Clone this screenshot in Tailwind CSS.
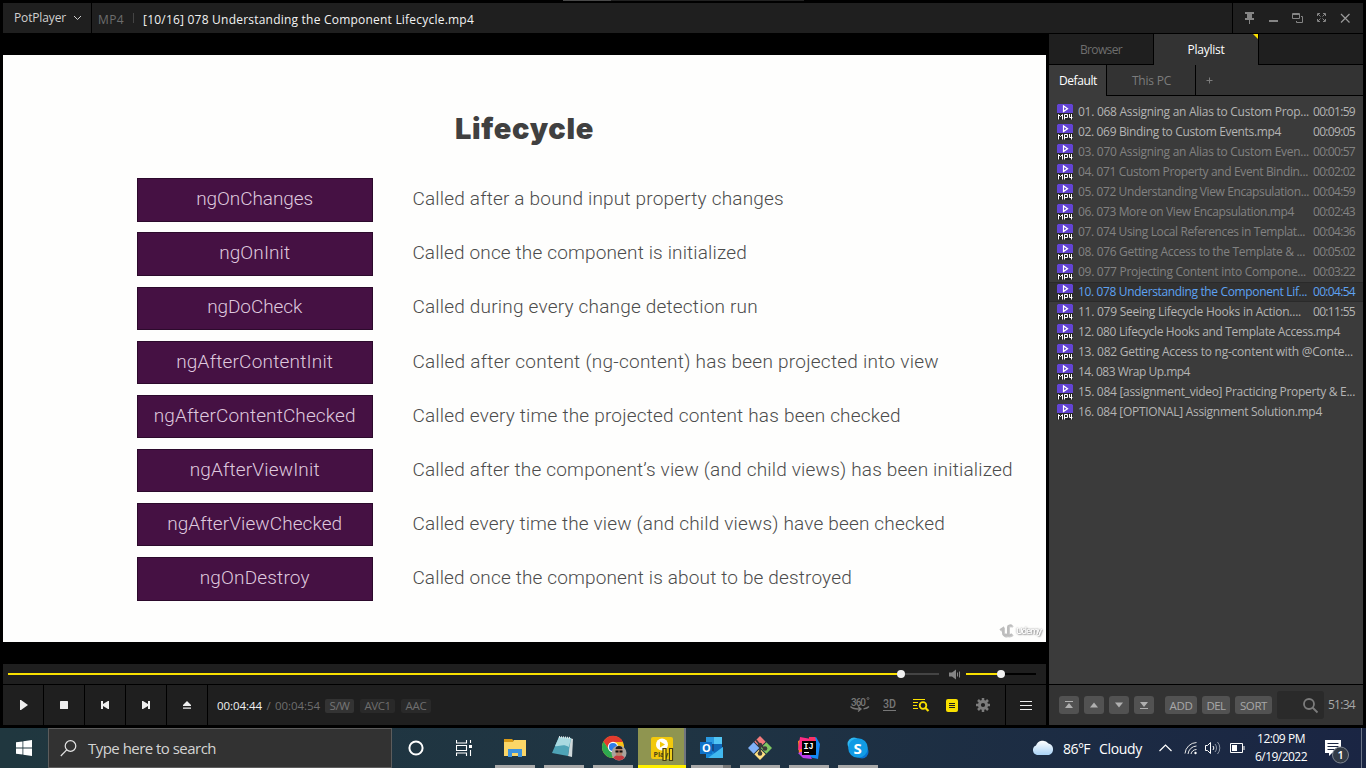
<!DOCTYPE html>
<html lang="en">
<head>
<meta charset="utf-8">
<title>PotPlayer</title>
<script src="https://cdn.jsdelivr.net/npm/@tailwindcss/browser@4"></script>
</head>
<body class="w-[1366px] h-[768px] overflow-hidden bg-black font-['Open_Sans','Noto_Sans',sans-serif] text-[12px] whitespace-nowrap select-none">
<div class="flex flex-col w-[1366px] h-[768px]">

  <!-- Player window -->
  <div class="flex flex-col h-[728px] px-[3px] pb-[3px]">
    <div class="h-[3px] flex pl-[560px]"><div class="w-12 h-px bg-[#4a4a4a]"></div><div class="w-[193px] h-px bg-[#222]"></div></div>

    <!-- Title bar -->
    <header class="flex h-[30px] gap-px shrink-0">
      <div class="w-[88px] bg-[#1f1f1f] flex items-center pl-[11px] pb-px text-[#d0d0d0]">
        <span class="leading-4" data-w="52">PotPlayer</span>
        <svg class="ml-[7px]" width="9" height="6" viewBox="0 0 9 6" fill="none" stroke="#d0d0d0"><path d="M1 1l3.500 3.500L8 1"/></svg>
      </div>
      <div class="w-[1140px] bg-[#1f1f1f] flex items-center pl-[6px] pt-[3px]">
        <span class="text-[#6d6d6d]" data-w="26">MP4</span>
        <span class="w-px h-[10px] bg-[#444] ml-[9px] mb-[3px]"></span>
        <span class="text-[#f2f2f2] ml-[9px]" data-w="331">[10/16] 078 Understanding the Component Lifecycle.mp4</span>
      </div>
      <div class="flex-1 bg-[#1f1f1f] flex items-center pl-[11px] gap-[13px]">
        <svg width="11" height="12" viewBox="0 0 11 12" fill="#858585"><path d="M1 0h9v2H8v4h2v2H6v4H5V8H1V6h2V2H1z"/></svg>
        <svg width="11" height="12" viewBox="0 0 11 12" fill="#858585"><path d="M1 8h9v2H1z"/></svg>
        <svg width="11" height="12" viewBox="0 0 11 12" fill="none" stroke="#858585"><path d="M.5 1.500h7v5h-7zM.5 2.500h7M9 4.500h1.500v6h-6V9"/></svg>
        <svg width="11" height="12" viewBox="0 0 11 12" fill="none" stroke="#858585"><path d="M1.500 4V1.500H4M7 1.500h2.500V4M9.500 7v2.500H7M4 9.500H1.500V7M2 2l2.500 2.500M9 2L6.500 4.500M2 9l2.500-2.500M9 9L6.500 6.500"/></svg>
        <svg width="11" height="12" viewBox="0 0 11 12" fill="none" stroke="#9a9a9a" stroke-width="1.200"><path d="M1 2l8.500 8.500M9.500 2L1 10.500"/></svg>
      </div>
    </header>

    <div class="flex flex-1 gap-[3px] min-h-0">
      <!-- Video and controls -->
      <main class="w-[1043px] flex flex-col">
        <section class="mt-[22px] h-[587px] bg-[#fefefd] font-[Roboto,sans-serif] relative">
          <h1 class="font-[Inter,sans-serif] font-black text-[29px] leading-[36px] text-[#404040] pt-[56px] pl-[452px]"><span data-w="139">Lifecycle</span></h1>
          <div id="hooks" class="mt-[31.300px] ml-[133.700px] flex flex-col gap-[10.850px]"></div>
          <div class="absolute right-[5px] bottom-[4px] flex items-center gap-[2px] text-[#ababab] drop-shadow-[1px_1px_0_#ccc]">
            <svg width="15" height="14" viewBox="0 0 15 14" fill="none" stroke="#bdbdbd" stroke-width="2"><path d="M1 6l3-2v5c0 4 5 3 5 0V3c0-2 3-2 4-1M6 10c2 2 5 2 7 0"/></svg>
            <span class="font-['Open_Sans',sans-serif] font-semibold text-[9px] leading-3 text-white [text-shadow:0_0_2px_#777]" data-w="25">Udemy</span>
          </div>
        </section>
        <div class="mt-[22px] h-[20px] bg-[#1f1f1f] flex items-center pl-[5px]">
          <div class="w-[893px] h-[2px] bg-[#f9e000]"></div>
          <div class="relative z-10 w-2 h-2 rounded-full bg-[#f0f0f0] -mx-1"></div>
          <div class="w-[38px] h-[2px] bg-[#444]"></div>
          <svg class="ml-[10px]" width="12" height="11" viewBox="0 0 12 11"><path fill="#858585" d="M0 3.500h3L7 .5v10l-4-3H0z"/><path stroke="#858585" d="M8.500 3.500v4M10.500 2.500v6"/></svg>
          <div class="ml-[5px] w-[35px] h-[2px] bg-[#f9e000]"></div>
          <div class="relative z-10 w-2 h-2 rounded-full bg-[#f0f0f0] -mx-1"></div>
          <div class="w-[35px] h-[2px] bg-black"></div>
        </div>
        <div class="mt-px h-[40px] flex gap-px">
          <div class="w-10 bg-[#1f1f1f] flex items-center justify-center"><svg width="12" height="12" viewBox="0 0 12 12" fill="#eee"><path d="M3 1h1l7 5-7 5H3z"/></svg></div>
          <div class="w-10 bg-[#1f1f1f] flex items-center justify-center"><svg width="12" height="12" viewBox="0 0 12 12" fill="#eee"><rect x="2" y="2" width="8" height="8" rx=".5"/></svg></div>
          <div class="w-10 bg-[#1f1f1f] flex items-center justify-center"><svg width="12" height="12" viewBox="0 0 12 12" fill="#eee"><path d="M2 2h2v3l5-3h1v8H9L4 7v3H2z"/></svg></div>
          <div class="w-10 bg-[#1f1f1f] flex items-center justify-center"><svg width="12" height="12" viewBox="0 0 12 12" fill="#eee"><path d="M10 2H8v3L3 2H2v8h1l5-3v3h2z"/></svg></div>
          <div class="w-10 bg-[#1f1f1f] flex items-center justify-center"><svg width="12" height="12" viewBox="0 0 12 12" fill="#eee"><path d="M6 2l4 4v1H2V6zM2 8.500h8v1.200H2z"/></svg></div>
          <div class="flex-1 bg-[#1f1f1f] flex items-center pl-[9px] text-[#6e6e6e] text-[11.500px]">
            <div class="flex items-center pt-[2px]">
              <span class="text-[#f0f0f0]" data-w="45">00:04:44</span><span class="w-[13px] text-center">/</span><span data-w="45">00:04:54</span>
              <span class="ml-[5px] h-[14px] w-[29px] rounded-[2px] bg-[#333] flex items-center justify-center text-[#777]"><span data-w="20">S/W</span></span>
              <span class="ml-[6px] h-[14px] w-[35px] rounded-[2px] bg-[#292929] flex items-center justify-center"><span data-w="26">AVC1</span></span>
              <span class="ml-[6px] h-[14px] w-[30px] rounded-[2px] bg-[#292929] flex items-center justify-center"><span data-w="21">AAC</span></span>
            </div>
            <div class="ml-auto flex items-center pr-[14px]">
              <svg width="20" height="18" viewBox="0 0 20 18"><text x="1" y="9.500" font-family="Roboto" font-weight="500" font-size="10" fill="#777" textLength="15">360</text><circle cx="18" cy="2.500" r="1" fill="none" stroke="#777" stroke-width=".8"/><path d="M.5 10.500c1.500 2 3.500 2.300 7.500 2.500M19 10.500c-1.500 1.700-3 2-5.500 2.300M8 10.500l3 2.500-3 2.500M8 13h3" fill="none" stroke="#777" stroke-width="1.300"/></svg>
              <svg class="ml-[12px]" width="15" height="18" viewBox="0 0 15 18"><text x="1" y="11.500" font-family="Roboto" font-weight="500" font-size="12" fill="#777" textLength="13" lengthAdjust="spacingAndGlyphs">3D</text><path d="M1 14.500h13" stroke="#777"/></svg>
              <svg class="ml-[15px]" width="18" height="14" viewBox="0 0 18 14" fill="none" stroke="#f9e000"><path d="M1 1.500h12M1 4.500h5M1 7.500h4M1 10.500h5"/><circle cx="11" cy="7.500" r="3.300" stroke-width="1.800"/><path d="M13.500 10l3 3" stroke-width="2.200"/></svg>
              <svg class="ml-[16px]" width="12" height="13" viewBox="0 0 12 13"><rect width="12" height="13" rx="2" fill="#f9e000"/><path d="M3 4.500h6M3 6.500h6M3 8.500h6" stroke="#1f1f1f"/></svg>
              <svg class="ml-[17px]" width="16" height="16" viewBox="0 0 16 16" fill="none" stroke="#7c7c7c"><circle cx="8" cy="8" r="3.600" stroke-width="3"/><path stroke-width="2.500" d="M8 1v3M8 12v3M1 8h3M12 8h3M3 3l2 2M11 11l2 2M13 3l-2 2M5 11l-2 2"/></svg>
            </div>
          </div>
          <div class="w-10 bg-[#1f1f1f] flex items-center justify-center"><svg width="12" height="10" viewBox="0 0 12 10" stroke="#eee"><path d="M0 1.500h12M0 5.500h12M0 9.500h12"/></svg></div>
        </div>
      </main>

      <!-- Playlist panel -->
      <aside class="flex-1 flex flex-col pt-px">
        <nav class="flex h-[31px]">
          <div class="w-[105px] border-r border-b border-black bg-[#1f1f1f] flex items-center justify-center text-[#6e6e6e] pt-px"><span data-w="42">Browser</span></div>
          <div class="w-[104px] bg-[#333] flex items-center justify-center text-white relative"><span data-w="37">Playlist</span><div class="absolute top-0 right-0 w-[5px] h-[5px] bg-[#f9e000] [clip-path:polygon(0_0,100%_0,100%_100%)]"></div></div>
          <div class="flex-1 border-l border-b border-black bg-[#1f1f1f]"></div>
        </nav>
        <nav class="flex h-[31px]">
          <div class="w-[57px] bg-[#3b3b3b] flex items-center justify-center text-white pt-px pl-px"><span data-w="38">Default</span></div>
          <div class="w-[90px] border-x border-b border-black bg-[#333] flex items-center justify-center text-[#7c7c7c] pt-px pl-px"><span data-w="39">This PC</span></div>
          <div class="flex-1 border-b border-black bg-[#333] flex items-center pl-[10px] pt-px"><svg width="7" height="7" viewBox="0 0 7 7" stroke="#7c7c7c"><path d="M3.500 .5v6M.5 3.500h6"/></svg></div>
        </nav>
        <div id="playlist" class="h-[588px] bg-[#3b3b3b] pt-[6px]"></div>
        <div class="mt-px flex-1 bg-[#333] flex items-center pl-[10px] text-[#a8a8a8]">
          <div class="flex gap-[5px]">
            <div class="w-5 h-[18px] rounded-[3px] bg-[#525252] flex items-center justify-center"><svg width="10" height="10" viewBox="0 0 10 10" fill="#b0b0b0"><path d="M1 1h8v1H1zM5 3l4 5H1z"/></svg></div>
            <div class="w-5 h-[18px] rounded-[3px] bg-[#525252] flex items-center justify-center"><svg width="10" height="10" viewBox="0 0 10 10" fill="#b0b0b0"><path d="M5 2.500l4 5H1z"/></svg></div>
            <div class="w-5 h-[18px] rounded-[3px] bg-[#525252] flex items-center justify-center"><svg width="10" height="10" viewBox="0 0 10 10" fill="#b0b0b0"><path d="M5 7.500l4-5H1z"/></svg></div>
            <div class="w-5 h-[18px] rounded-[3px] bg-[#525252] flex items-center justify-center"><svg width="10" height="10" viewBox="0 0 10 10" fill="#b0b0b0"><path d="M1 8h8v1H1zM5 7l4-5H1z"/></svg></div>
          </div>
          <div class="ml-[11px] w-8 h-[18px] rounded-[3px] bg-[#525252] flex items-center justify-center text-[11.500px] pt-[2px]"><span data-w="23">ADD</span></div>
          <div class="ml-[5px] w-7 h-[18px] rounded-[3px] bg-[#525252] flex items-center justify-center text-[11.500px] pt-[2px]"><span data-w="19">DEL</span></div>
          <div class="ml-[5px] w-[37px] h-[18px] rounded-[3px] bg-[#525252] flex items-center justify-center text-[11.500px] pt-[2px]"><span data-w="27">SORT</span></div>
          <div class="ml-[5px] w-[47px] h-7 rounded-[3px] bg-[#2a2a2a] flex items-center justify-end pr-[5px]"><svg width="17" height="17" viewBox="0 0 17 17" fill="none" stroke="#7c7c7c" stroke-width="1.800"><circle cx="7" cy="7" r="5"/><path d="M10.500 10.500l5 5"/></svg></div>
          <span class="ml-[4px]" data-w="27">51:34</span>
        </div>
      </aside>
    </div>
  </div>

  <!-- Taskbar -->
  <footer class="h-10 flex bg-linear-to-r from-[#20373f] via-[#1f3443] to-[#1a2543] text-white">
    <div class="w-12 flex items-center justify-center"><svg width="16" height="16" viewBox="0 0 16 16" fill="#fff"><path d="M0 2.300L6.500 1.400V7.500H0zM7.300 1.200L16 0v7.500H7.300zM0 8.400h6.500v6.200L0 13.700zM7.300 8.400H16V16l-8.700-1.200z"/></svg></div>
    <div class="w-[344px] border border-[#5c5c5c] bg-[#323232] flex items-center pl-[11px] text-[#d4d4d4] text-[15px]">
      <svg width="17" height="17" viewBox="0 0 17 17" fill="none" stroke="#e4e4e4" stroke-width="1.200"><circle cx="10.500" cy="6" r="5.300"/><path d="M6.700 9.800L.8 16"/></svg>
      <span class="ml-[11px]" data-w="128">Type here to search</span>
    </div>
    <div class="w-[48px] flex items-center justify-center"><svg width="16" height="16" viewBox="0 0 16 16" fill="none" stroke="#fff" stroke-width="2"><circle cx="8" cy="8" r="6.600"/></svg></div>
    <div class="w-[50px] flex items-center pl-[16px]"><svg width="17" height="16" viewBox="0 0 17 16" fill="none" stroke="#fff" stroke-width="1.100"><path d="M.5 0v3h10V0M.5 5.500h10v5H.5zM.5 16v-3h10v3M14.500 0v3M14.500 10v6"/><path fill="#fff" stroke="none" d="M13 5h3v3h-3z"/></svg></div>

    <div class="w-[49px] flex flex-col items-center"><div class="h-[37px] flex items-center"><svg class="translate-y-px" width="22" height="19" viewBox="0 0 22 19"><path fill="#d99a16" d="M0 1h8l2 2v3H0z"/><path fill="#fbd667" d="M0 4h9l1-2h12v16H0z"/><path fill="#3f93db" d="M4 19v-8h14v8h-4v-4H8v4z"/></svg></div><div class="w-10 h-[3px] bg-[#a9a9a9]"></div></div>
    <div class="w-[49px] flex flex-col items-center"><div class="h-[37px] flex items-center"><svg class="-translate-x-px" width="23" height="23" viewBox="0 0 23 23"><path fill="#cfd8da" d="M19 3l3 1-1 18-4-1z"/><path fill="#4fa3b6" d="M8 2l12 1-3 18L1 18z"/><path fill="#a9d9e0" d="M8 2l12 1-2 9C12 8 8 12 4 11z"/><path d="M8 2l12 1" stroke="#dfe7e8" stroke-width="2" stroke-dasharray="1 1"/></svg></div><div class="w-10 h-[3px] bg-[#a9a9a9]"></div></div>
    <div class="w-[50px] flex flex-col items-center"><div class="h-[37px] flex items-center"><svg class="translate-x-px translate-y-px" width="26" height="26" viewBox="0 0 26 26"><circle cx="12" cy="12" r="11" fill="#fbc116"/><path d="M2.500 6.500A11 11 0 0 1 22 7H12L7.500 14z" fill="#e33b2e"/><path d="M2.500 6.500A11 11 0 0 0 11 23l5-8-8.500-1z" fill="#2da94f"/><circle cx="12" cy="12" r="5.200" fill="#fff"/><circle cx="12" cy="12" r="4.100" fill="#2d7de9"/><circle cx="18" cy="18" r="7.500" fill="#a9a49e"/><path d="M12.500 23c1-4 10-4 11 0a7.500 7.500 0 0 1-11 0z" fill="#c5383f"/><ellipse cx="18" cy="16.500" rx="3.500" ry="4.500" fill="#b88368"/><path d="M14.500 14c0-4 7-4 7 0z" fill="#221c1b"/><path d="M14.500 15.500h3v2h-3zM18.500 15.500h3v2h-3z" fill="#111"/></svg></div><div class="w-10 h-[3px] bg-[#a9a9a9]"></div></div>
    <div class="w-[48px] flex flex-col items-center bg-[#8f9550] border-r-2 border-[#6f7480]"><div class="h-[37px] flex items-center"><svg class="translate-x-px translate-y-px" width="24" height="26" viewBox="0 0 24 26"><rect x="1" y="2" width="22" height="22" rx="2" fill="#f2c90d"/><circle cx="12" cy="9.500" r="6" fill="#fff"/><path d="M10 6.500l5 3-5 3z" fill="#f2c90d"/><text x="3.500" y="22" font-family="Open Sans" font-weight="700" font-size="7" fill="#4d4515">Play</text><path fill="#ffde20" stroke="#453d10" stroke-width="1.200" d="M13 13.500h3v12h-3zM19.500 13.500h3v12h-3z"/></svg></div><div class="w-[48px] shrink-0 h-[3px] translate-x-px bg-[#fff000]"></div></div>
    <div class="w-[50px] flex flex-col items-center"><div class="h-[37px] flex items-center"><svg class="translate-y-px" width="25" height="24" viewBox="0 0 25 24"><path fill="#1067b7" d="M7 1h16v18H7z"/><path fill="#2a9ae2" d="M7 1h8v7H7z"/><path fill="#52c6f5" d="M15 1h8v7h-8z"/><path fill="#174a87" d="M7 8h8v7H7z"/><path fill="#1788d8" d="M7 22V12l9 5 8-6v11z"/><path fill="#41b8ee" d="M24 11v11H9z"/><path fill="#0f71c8" d="M1 6h12v12H1z"/><text x="3" y="16" font-family="Open Sans" font-weight="700" font-size="11" fill="#fff">O</text></svg></div><div class="w-10 h-[3px] flex bg-[#a9a9a9] justify-end"><div class="w-[8px] bg-[#777]"></div></div></div>
    <div class="w-[48px] flex flex-col items-center"><div class="h-[37px] flex items-center"><svg class="translate-y-px" width="24" height="24" viewBox="0 0 24 24"><g transform="rotate(45 12 12)"><path fill="#f47b7c" d="M3.500 3.500h8v8h-8z"/><path fill="#80c862" d="M12.500 3.500h8v8h-8z"/><path fill="#80b1f8" d="M3.500 12.500h8v8h-8z"/><path fill="#ffe082" d="M12.500 12.500h8v8h-8z"/></g><path d="M8 4l4 5v9M12 9l5 4" fill="none" stroke="#3b3b3b" stroke-width="1.800"/><g fill="#3b3b3b"><circle cx="12" cy="9" r="2.300"/><circle cx="12" cy="17.500" r="2.300"/><circle cx="17" cy="12.500" r="2.300"/></g></svg></div><div class="w-10 h-[3px] bg-[#a9a9a9]"></div></div>
    <div class="w-[50px] flex flex-col items-center"><div class="h-[37px] flex items-center"><svg class="translate-y-px" width="24" height="24" viewBox="0 0 24 24"><path fill="#ff8123" d="M1 5l7-3v14l-6 2z"/><path fill="#fe2c85" d="M3 1l11 2-2 8L1 14z"/><path fill="#1488f5" d="M13 4l6-3 4 7-2 15-9-2z"/><path fill="#bb3df0" d="M1 17l9-3 5 9-9-1z"/><path fill="#fc3164" d="M12 1h6l1 4h-7z"/><path d="M5 5h14v14H5z"/><text x="6.500" y="12.500" font-family="Liberation Mono" font-weight="700" font-size="8.500" fill="#fff">IJ</text><path fill="#fff" d="M7 16h5v1H7z"/></svg></div><div class="w-10 h-[3px] bg-[#a9a9a9]"></div></div>
    <div class="w-[48px] flex flex-col items-center"><div class="h-[37px] flex items-center"><svg class="translate-y-px" width="24" height="24" viewBox="0 0 24 24"><circle cx="8" cy="8" r="6.500" fill="#30b8f1"/><circle cx="16" cy="16" r="6.500" fill="#0972d0"/><circle cx="12" cy="12" r="9.800" fill="#119be5"/><text x="7.500" y="17.500" font-family="Open Sans" font-weight="700" font-size="15" fill="#fff">S</text></svg></div><div class="w-10 h-[3px] bg-[#a9a9a9]"></div></div>

    <!-- Tray -->
    <div class="flex items-center ml-auto w-[335px] text-[14px]">
      <svg width="24" height="18" viewBox="0 0 24 18"><defs><linearGradient id="cl" x2="0" y2="1"><stop stop-color="#fff"/><stop offset="1" stop-color="#a9d2f5"/></linearGradient></defs><path fill="url(#cl)" d="M6 16a5 5 0 0 1-1-9.500A7.200 7.200 0 0 1 17.500 4.500a6 6 0 0 1 .5 11.500z"/></svg>
      <span class="ml-[8px]" data-w="27">86°F</span><span class="ml-[9px]" data-w="43">Cloudy</span>
      <svg class="ml-[17px]" width="13" height="8" viewBox="0 0 13 8" fill="none" stroke="#fff" stroke-width="1.200"><path d="M.5 7l6-6 6 6"/></svg>
      <svg class="ml-[12px]" width="14" height="14" viewBox="0 0 14 14" fill="none" stroke="#e8e8e8"><path d="M1 12.500A12 12 0 0 1 12.500 1.500M4 13A9 9 0 0 1 12.500 5M7 13a6 6 0 0 1 5.500-4.500"/><circle cx="11.500" cy="12" r="1.200" fill="#fff" stroke="none"/></svg>
      <svg class="ml-[7px]" width="16" height="14" viewBox="0 0 16 14" fill="none" stroke="#fff"><path d="M.5 4.500h2l3-3v11l-3-3h-2zM8 5a3 3 0 0 1 0 4"/><path stroke="#8f97a6" d="M10 3a6 6 0 0 1 0 8M12.500 1a9 9 0 0 1 0 12"/></svg>
      <svg class="ml-[9px]" width="15" height="10" viewBox="0 0 15 10" fill="none" stroke="#fff"><path d="M.5.5h12v9H.5zM14 3v4"/><path fill="#fff" stroke="none" d="M2 2h5v6H2z"/></svg>
      <div class="ml-[9px] w-[54px] flex flex-col items-center text-[12px] leading-[18px] -mt-px"><span data-w="48">12:09 PM</span><span data-w="52">6/19/2022</span></div>
      <svg class="ml-[16px] mt-[8px]" width="26" height="26" viewBox="0 0 26 26"><path fill="#fff" d="M1 1h16v13H8l-3 3v-3H1z"/><path stroke="#1b2743" d="M3.500 4.500h11M3.500 7.500h11M3.500 10.500h7"/><circle cx="16.500" cy="16" r="8" fill="#333b46" stroke="#7e8590"/><text x="13.500" y="20" font-family="Open Sans" font-size="11" font-weight="600" fill="#fff">1</text></svg>
      <div class="ml-auto mr-[4px] w-px h-10 bg-[#6c7588]"></div>
    </div>
  </footer>
</div>

<script>
  // [label, label width, description, description width]
  const hooks = [
    ['ngOnChanges', 117, 'Called after a bound input property changes', 371],
    ['ngOnInit', 71, 'Called once the component is initialized', 334],
    ['ngDoCheck', 95, 'Called during every change detection run', 345],
    ['ngAfterContentInit', 157, 'Called after content (ng-content) has been projected into view', 526],
    ['ngAfterContentChecked', 202, 'Called every time the projected content has been checked', 488],
    ['ngAfterViewInit', 130, 'Called after the component’s view (and child views) has been initialized', 600],
    ['ngAfterViewChecked', 175, 'Called every time the view (and child views) have been checked', 532],
    ['ngOnDestroy', 110, 'Called once the component is about to be destroyed', 439],
  ];
  document.getElementById('hooks').innerHTML = hooks.map(([n, nw, d, dw]) => `
    <div class="flex items-center h-[43.300px] text-[19px] font-light">
      <div class="w-[236px] shrink-0 h-full bg-[#451143] border border-[#2c0a2c] flex items-center justify-center text-[#dfc8de] pb-px"><span data-w="${nw}">${n}</span></div>
      <span class="ml-[39.700px] pb-px text-[#4c4c4c]" data-w="${dw + 0.5}">${d}</span>
    </div>`).join('');

  // [title, title width, duration, state]
  const items = [
    ['01. 068 Assigning an Alias to Custom Prop...', 231, '00:01:59', ''],
    ['02. 069 Binding to Custom Events.mp4', 203, '00:09:05', ''],
    ['03. 070 Assigning an Alias to Custom Even...', 231, '00:00:57', 'seen'],
    ['04. 071 Custom Property and Event Bindin...', 230, '00:02:02', 'seen'],
    ['05. 072 Understanding View Encapsulation...', 231, '00:04:59', 'seen'],
    ['06. 073 More on View Encapsulation.mp4', 216, '00:02:43', 'seen'],
    ['07. 074 Using Local References in Templat...', 227, '00:04:36', 'seen'],
    ['08. 076 Getting Access to the Template &amp; ...', 227, '00:05:02', 'seen'],
    ['09. 077 Projecting Content into Compone...', 228, '00:03:22', 'seen'],
    ['10. 078 Understanding the Component Lif...', 229, '00:04:54', 'playing'],
    ['11. 079 Seeing Lifecycle Hooks in Action....', 223, '00:11:55', ''],
    ['12. 080 Lifecycle Hooks and Template Access.mp4', 262, '', ''],
    ['13. 082 Getting Access to ng-content with @Conte...', 275, '', ''],
    ['14. 083 Wrap Up.mp4', 112, '', ''],
    ['15. 084 [assignment_video] Practicing Property &amp; E...', 277, '', ''],
    ['16. 084 [OPTIONAL] Assignment Solution.mp4', 244, '', ''],
  ];
  const tone = {
    '': 'text-[#b4b4b4] border-transparent',
    seen: 'text-[#828282] border-transparent',
    playing: 'text-[#5ea2f2] bg-[#313131] border-[#2a2a2a]',
  };
  document.getElementById('playlist').innerHTML = items.map(([t, w, time, s]) => `
    <div class="h-5 flex items-center border-y pl-2 pr-2 ${tone[s]}">
      <svg class="shrink-0" width="16" height="16" viewBox="0 0 16 16"><rect width="16" height="16" rx="1" fill="#262626"/><path fill="#6344d4" d="M1 0h14l1 1v8H0V1z"/><path d="M6.500 2v5.500L10.500 4.700z" fill="none" stroke="#fff" stroke-width="1.200"/><path d="M1.500 15.500v-5l2 2 2-2v5M7.500 15.500v-5h3v3h-3M12.500 10v3.500H15.500M14.500 10v5.500" fill="none" stroke="#fff"/></svg>
      <span class="ml-[5px] leading-[18px]" data-w="${w}">${t}</span>
      <span class="ml-auto leading-[18px]" ${time ? 'data-w="42"' : ''}>${time}</span>
    </div>`).join('');

  // Track each label so that it fills its intended width
  function fit() {
    document.querySelectorAll('[data-w]').forEach(el => {
      el.style.letterSpacing = '0px';
      const range = document.createRange();
      range.selectNodeContents(el);
      const gap = (el.dataset.w - range.getBoundingClientRect().width) / el.textContent.length;
      el.style.letterSpacing = gap.toFixed(3) + 'px';
    });
  }
  fit();
  window.addEventListener('load', () => requestAnimationFrame(fit));
  document.fonts.ready.then(fit);
  new ResizeObserver(fit).observe(document.body);
</script>
</body>
</html>
